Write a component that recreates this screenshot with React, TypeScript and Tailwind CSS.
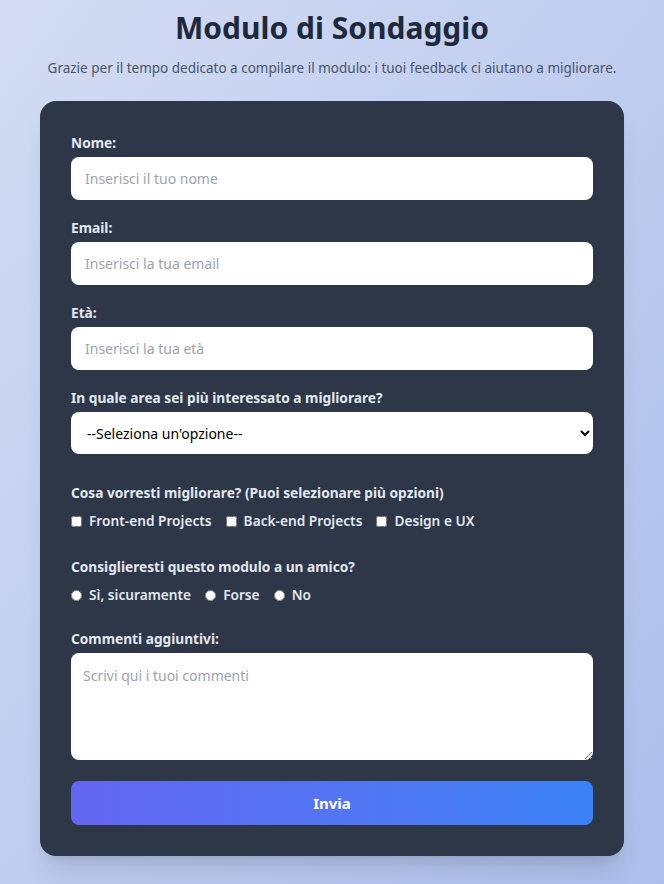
import React from "react";

const font = { fontFamily: '"Noto Sans", "Liberation Sans", sans-serif' };

const Field = ({ label, children }: { label: string; children: React.ReactNode }) => (
  <div className="mb-[18px]">
    <label className="block text-[13.7px] leading-5 font-bold text-[#e2e8f0] mb-1">{label}</label>
    {children}
  </div>
);

const inputCls =
  "block w-full h-[43px] rounded-lg bg-white px-[14px] text-[14px] text-black placeholder:text-[#9ca3af] outline-none";

export default function App() {
  return (
    <div
      className="min-h-[884px] w-full bg-gradient-to-br from-[#d3dcf3] to-[#adbeeb] pt-2 pb-7"
      style={font}
    >
      <h1 className="text-center text-[30px] leading-10 font-bold text-[#1e293b]">Modulo di Sondaggio</h1>
      <p className="mt-[10px] text-center text-[13.5px] text-[#4a5568]">
        Grazie per il tempo dedicato a compilare il modulo: i tuoi feedback ci aiutano a migliorare.
      </p>

      <form className="mx-10 mt-[23px] rounded-2xl bg-[#2d3748] px-[31px] pt-8 pb-[31px] shadow-xl">
        <Field label="Nome:">
          <input type="text" placeholder="Inserisci il tuo nome" className={inputCls} />
        </Field>
        <Field label="Email:">
          <input type="email" placeholder="Inserisci la tua email" className={inputCls} />
        </Field>
        <Field label="Età:">
          <input type="number" placeholder="Inserisci la tua età" className={inputCls} />
        </Field>
        <div className="mb-[29px]">
          <label className="block text-[13.7px] leading-5 font-bold text-[#e2e8f0] mb-1">
            In quale area sei più interessato a migliorare?
          </label>
          <select className="block w-full h-[42px] rounded-lg bg-white px-3 text-[14px] text-black outline-none">
            <option>--Seleziona un'opzione--</option>
          </select>
        </div>

        <div className="mb-[25px]">
          <p className="text-[13.7px] leading-5 font-bold text-[#e2e8f0] mb-[8px]">
            Cosa vorresti migliorare? (Puoi selezionare più opzioni)
          </p>
          <div className="flex items-center gap-[14px] text-[13.7px] font-semibold text-[#e2e8f0]">
            {["Front-end Projects", "Back-end Projects", "Design e UX"].map((t) => (
              <label key={t} className="flex items-center gap-[7px]">
                <input type="checkbox" className="m-0 h-[11px] w-[11px]" />
                {t}
              </label>
            ))}
          </div>
        </div>

        <div className="mb-6">
          <p className="text-[13.7px] leading-5 font-bold text-[#e2e8f0] mb-[8px]">
            Consiglieresti questo modulo a un amico?
          </p>
          <div className="flex items-center gap-[14px] text-[13.7px] font-semibold text-[#e2e8f0]">
            {["Sì, sicuramente", "Forse", "No"].map((t) => (
              <label key={t} className="flex items-center gap-[7px]">
                <input type="radio" name="consiglio" className="m-0 h-[11px] w-[11px]" />
                {t}
              </label>
            ))}
          </div>
        </div>

        <div className="mb-[21px]">
          <label className="block text-[13.7px] leading-5 font-bold text-[#e2e8f0] mb-1">Commenti aggiuntivi:</label>
          <textarea
            placeholder="Scrivi qui i tuoi commenti"
            className="block w-full h-[107px] rounded-lg bg-white px-3 py-[12px] text-[14px] text-black placeholder:text-[#9ca3af] outline-none"
          />
        </div>

        <button
          type="button"
          className="block w-full h-[44px] rounded-lg bg-gradient-to-r from-[#6366f1] to-[#3b82f6] text-[15px] font-bold text-white"
        >
          Invia
        </button>
      </form>
    </div>
  );
}
